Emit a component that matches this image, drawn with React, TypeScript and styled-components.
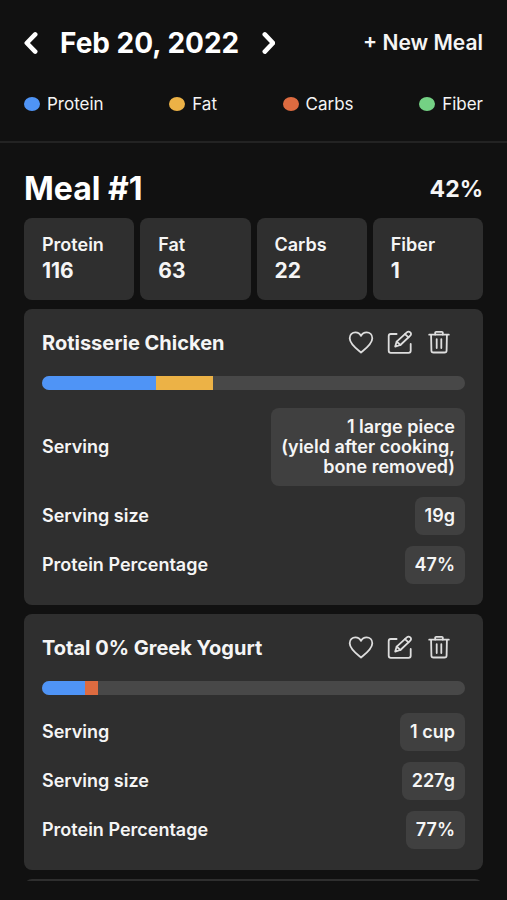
import React from "react";
import styled, { createGlobalStyle } from "styled-components";

const colors = {
  page: "#111111",
  card: "#2f2f2f",
  chip: "#404040",
  track: "#484848",
  line: "#232323",
  text: "#f5f5f5",
  protein: "#4f94f6",
  fat: "#ecb246",
  carbs: "#dd6b40",
  fiber: "#74d184",
};

type Macro = "protein" | "fat" | "carbs" | "fiber";

interface Food {
  id: string;
  name: string;
  segments: { macro: Macro; share: number }[];
  facts: { label: string; value: string }[];
}

const legend: { macro: Macro; label: string; total: number }[] = [
  { macro: "protein", label: "Protein", total: 116 },
  { macro: "fat", label: "Fat", total: 63 },
  { macro: "carbs", label: "Carbs", total: 22 },
  { macro: "fiber", label: "Fiber", total: 1 },
];

const foods: Food[] = [
  {
    id: "chicken",
    name: "Rotisserie Chicken",
    segments: [
      { macro: "protein", share: 27 },
      { macro: "fat", share: 13.5 },
    ],
    facts: [
      { label: "Serving", value: "1 large piece\n(yield after cooking,\nbone removed)" },
      { label: "Serving size", value: "19g" },
      { label: "Protein Percentage", value: "47%" },
    ],
  },
  {
    id: "yogurt",
    name: "Total 0% Greek Yogurt",
    segments: [
      { macro: "protein", share: 10.1 },
      { macro: "carbs", share: 3.1 },
    ],
    facts: [
      { label: "Serving", value: "1 cup" },
      { label: "Serving size", value: "227g" },
      { label: "Protein Percentage", value: "77%" },
    ],
  },
];

const GlobalStyle = createGlobalStyle`
  *, *::before, *::after { box-sizing: border-box; }
  body {
    margin: 0;
    background: ${colors.page};
    color: ${colors.text};
    font-family: Inter, "Liberation Sans", sans-serif;
    font-size: 18px;
    line-height: 20px;
  }
  button {
    padding: 0;
    border: 0;
    background: none;
    color: inherit;
    font: inherit;
    cursor: pointer;
  }
  h1, h2, h3, dl, dd, ul { margin: 0; padding: 0; }
`;

const Page = styled.div`
  display: flex;
  flex-direction: column;
  height: 100vh;
  padding-bottom: 19px;
`;

const Header = styled.header`
  flex: none;
  padding: 24px 24px 27px;
  border-bottom: 2px solid ${colors.line};
`;

const TopBar = styled.div`
  display: flex;
  align-items: center;
  justify-content: space-between;
  height: 38px;
`;

const DateNav = styled.div`
  display: flex;
  align-items: center;
  gap: 20px;
`;

const DateTitle = styled.h1`
  font-size: 28px;
  line-height: 36px;
  font-weight: 700;
  color: #ffffff;
`;

const ArrowButton = styled.button`
  display: flex;
`;

const NewMealButton = styled.button`
  font-size: 21px;
  line-height: 28px;
  font-weight: 600;
`;

const Legend = styled.ul`
  display: flex;
  justify-content: space-between;
  margin-top: 32px;
  list-style: none;
`;

const LegendItem = styled.li`
  display: flex;
  align-items: center;
  gap: 7px;
  font-size: 17px;
`;

const Dot = styled.span<{ $macro: Macro }>`
  width: 16px;
  height: 14px;
  border-radius: 50%;
  background: ${({ $macro }) => colors[$macro]};
`;

const Scroller = styled.main`
  flex: 1;
  min-height: 0;
  overflow: hidden;
  padding: 26px 24px 0;
`;

const MealHeader = styled.div`
  display: flex;
  align-items: center;
  justify-content: space-between;
  height: 40px;
`;

const MealTitle = styled.h2`
  font-size: 32px;
  line-height: 40px;
  font-weight: 700;
  color: #ffffff;
`;

const MealShare = styled.span`
  font-size: 23px;
  line-height: 28px;
  font-weight: 700;
`;

const Totals = styled.dl`
  display: grid;
  grid-template-columns: repeat(4, 1fr);
  gap: 6px;
  margin-top: 9px;
`;

const Total = styled.div`
  padding: 16px 18px;
  border-radius: 8px;
  background: ${colors.card};
`;

const TotalLabel = styled.dt`
  line-height: 22px;
  font-weight: 600;
`;

const TotalValue = styled.dd`
  margin-top: 2px;
  font-size: 21px;
  line-height: 26px;
  font-weight: 700;
`;

const FoodList = styled.div`
  display: flex;
  flex-direction: column;
  gap: 9px;
  margin-top: 9px;
`;

const FoodCard = styled.article`
  min-height: 80px;
  padding: 20px 18px 21px;
  border-radius: 8px;
  background: ${colors.card};
`;

const FoodHeader = styled.div`
  display: flex;
  align-items: center;
  justify-content: space-between;
  height: 28px;
`;

const FoodName = styled.h3`
  font-size: 20px;
  line-height: 28px;
  font-weight: 700;
`;

const Actions = styled.div`
  display: flex;
  gap: 13px;
  margin-right: 13px;
`;

const IconButton = styled.button`
  display: flex;
  color: #dedede;
`;

const Track = styled.div`
  display: flex;
  height: 14px;
  margin: 19px 0 18px;
  border-radius: 7px;
  overflow: hidden;
  background: ${colors.track};
`;

const Segment = styled.span<{ $macro: Macro }>`
  background: ${({ $macro }) => colors[$macro]};
`;

const Facts = styled.dl`
  display: flex;
  flex-direction: column;
  gap: 11px;
`;

const Fact = styled.div`
  display: flex;
  align-items: center;
  justify-content: space-between;
`;

const FactLabel = styled.dt`
  font-weight: 600;
`;

const FactValue = styled.dd`
  padding: 9px 10px;
  border-radius: 8px;
  background: ${colors.chip};
  font-weight: 600;
  text-align: right;
  white-space: pre-line;
`;

const Chevron = ({ d }: { d: string }) => (
  <svg width="16" height="24" viewBox="0 0 16 24" fill="none" stroke="#fff" strokeWidth="4.6" strokeLinecap="round" strokeLinejoin="round" aria-hidden="true">
    <path d={d} />
  </svg>
);

const Icon = ({ children }: { children: React.ReactNode }) => (
  <svg width="26" height="26" viewBox="0 0 26 26" fill="none" stroke="currentColor" strokeWidth="1.8" strokeLinecap="round" strokeLinejoin="round" aria-hidden="true">
    {children}
  </svg>
);

const HeartIcon = () => (
  <Icon>
    <path d="M13 22.5C8.6 18.9 1.7 13.9 1.7 8.2C1.7 4.6 4.4 2.4 7.4 2.4C9.8 2.4 11.9 3.7 13 5.9C14.1 3.7 16.2 2.4 18.6 2.4C21.6 2.4 24.3 4.6 24.3 8.2C24.3 13.9 17.4 18.9 13 22.5Z" />
  </Icon>
);

const EditIcon = () => (
  <Icon>
    <path d="M9.6 4H3.8C2.5 4 1.7 4.8 1.7 6V20.8C1.7 22 2.5 22.8 3.8 22.8H21.6C22.9 22.8 23.7 22 23.7 20.8V14" />
    <path d="M8.2 16.6L9.7 11.6L19.8 2.4C20.8 1.5 22.3 1.5 23.3 2.4C24.3 3.3 24.3 4.7 23.3 5.6L13.4 15Z" />
    <path d="M18 4.2L21.5 7.4M9.7 11.6L13.4 15" />
  </Icon>
);

const TrashIcon = () => (
  <Icon>
    <path d="M3.2 4.7H22.8" />
    <path d="M9.2 4.6V2.6C9.2 2.1 9.6 1.8 10.2 1.8H15.8C16.4 1.8 16.8 2.1 16.8 2.6V4.6" />
    <path d="M5.1 5L5.4 20.4C5.4 21.8 6.3 22.5 7.6 22.5H18.4C19.7 22.5 20.6 21.8 20.6 20.4L20.9 5" />
    <path d="M10.7 9.1V18.1M15.3 9.1V18.1" />
  </Icon>
);

export default function App() {
  return (
    <>
      <GlobalStyle />
      <Page>
        <Header>
          <TopBar>
            <DateNav>
              <ArrowButton type="button" aria-label="Previous day">
                <Chevron d="M11.2 3.4L2.8 12L11.2 20.6" />
              </ArrowButton>
              <DateTitle>Feb 20, 2022</DateTitle>
              <ArrowButton type="button" aria-label="Next day">
                <Chevron d="M5.8 3.4L14 12L5.8 20.6" />
              </ArrowButton>
            </DateNav>
            <NewMealButton type="button">+ New Meal</NewMealButton>
          </TopBar>
          <Legend>
            {legend.map(({ macro, label }) => (
              <LegendItem key={macro}>
                <Dot $macro={macro} />
                {label}
              </LegendItem>
            ))}
          </Legend>
        </Header>
        <Scroller>
          <MealHeader>
            <MealTitle>Meal #1</MealTitle>
            <MealShare>42%</MealShare>
          </MealHeader>
          <Totals>
            {legend.map(({ macro, label, total }) => (
              <Total key={macro}>
                <TotalLabel>{label}</TotalLabel>
                <TotalValue>{total}</TotalValue>
              </Total>
            ))}
          </Totals>
          <FoodList>
            {foods.map((food) => (
              <FoodCard key={food.id}>
                <FoodHeader>
                  <FoodName>{food.name}</FoodName>
                  <Actions>
                    <IconButton type="button" aria-label="Favorite">
                      <HeartIcon />
                    </IconButton>
                    <IconButton type="button" aria-label="Edit">
                      <EditIcon />
                    </IconButton>
                    <IconButton type="button" aria-label="Delete">
                      <TrashIcon />
                    </IconButton>
                  </Actions>
                </FoodHeader>
                <Track>
                  {food.segments.map(({ macro, share }) => (
                    <Segment key={macro} $macro={macro} style={{ width: `${share}%` }} />
                  ))}
                </Track>
                <Facts>
                  {food.facts.map(({ label, value }) => (
                    <Fact key={label}>
                      <FactLabel>{label}</FactLabel>
                      <FactValue>{value}</FactValue>
                    </Fact>
                  ))}
                </Facts>
              </FoodCard>
            ))}
            <FoodCard />
          </FoodList>
        </Scroller>
      </Page>
    </>
  );
}
